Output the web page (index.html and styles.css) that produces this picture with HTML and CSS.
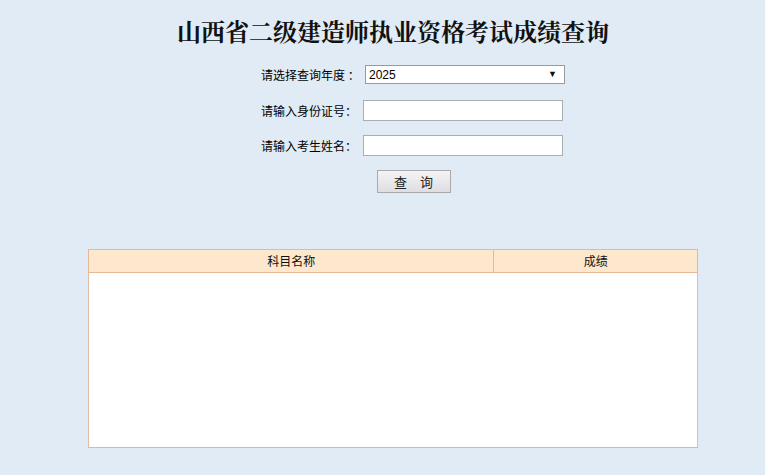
FILE: index.html
```html
<!DOCTYPE html>
<html lang="zh-CN">
<head>
<meta charset="utf-8">
<title>山西省二级建造师执业资格考试成绩查询</title>
<link rel="stylesheet" href="styles.css">
</head>
<body>
<div class="page">
  <h1 class="title">山西省二级建造师执业资格考试成绩查询</h1>
  <form class="form">
    <div class="row">
      <label class="label">请选择查询年度 ：</label>
      <div class="select-wrap">
        <select class="select"><option>2025</option></select>
        <span class="arrow">▼</span>
      </div>
    </div>
    <div class="row">
      <label class="label">请输入身份证号：</label>
      <input class="input" type="text">
    </div>
    <div class="row">
      <label class="label">请输入考生姓名：</label>
      <input class="input" type="text">
    </div>
    <div class="row row-btn">
      <button type="button" class="btn">查　询</button>
    </div>
  </form>
  <table class="result">
    <thead>
      <tr><th class="col-name">科目名称</th><th class="col-score">成绩</th></tr>
    </thead>
    <tbody>
      <tr><td colspan="2" class="empty"></td></tr>
    </tbody>
  </table>
</div>
</body>
</html>
```

FILE: styles.css
```css
html, body {
  margin: 0;
  padding: 0;
  background: #e0ebf5;
}
body {
  font-family: "Liberation Sans", "Noto Sans CJK SC", sans-serif;
  font-size: 12px;
  color: #000;
}
.page {
  padding-left: 21px;
  padding-top: 16px;
}
.title {
  margin: 0;
  text-align: center;
  font-family: "Noto Serif CJK SC", "Noto Sans CJK SC", serif;
  font-size: 24px;
  line-height: 30px;
  font-weight: 700;
  color: #111;
}
.form {
  width: 305px;
  margin: 11px 0 0 calc(50% - 132px);
}
.row {
  display: flex;
  align-items: center;
  height: 35px;
}
.row + .row {
  margin-top: 0.5px;
}
.label {
  width: 96px;
  margin-right: 6px;
  text-align: right;
  white-space: nowrap;
  font-family: "Noto Sans CJK SC", sans-serif;
  font-size: 12px;
}
.select-wrap {
  position: relative;
  margin-left: 2px;
  width: 200px;
  height: 19px;
}
.select {
  appearance: none;
  -webkit-appearance: none;
  box-sizing: border-box;
  width: 200px;
  height: 19px;
  margin: 0;
  padding: 0 0 0 3px;
  border: 1px solid #9a9a9a;
  background: #fff;
  font-family: "Liberation Sans", sans-serif;
  font-size: 12px;
  color: #000;
  border-radius: 0;
}
.arrow {
  position: absolute;
  right: 8px;
  top: 4px;
  font-size: 9px;
  line-height: 10px;
  color: #111;
  pointer-events: none;
}
.input {
  box-sizing: border-box;
  width: 200px;
  height: 21px;
  margin: 0;
  padding: 0 3px;
  border: 1px solid #a7afb5;
  background: #fff;
  border-radius: 0;
}
.row-btn {
  justify-content: center;
}
.btn {
  box-sizing: border-box;
  width: 74px;
  height: 23px;
  padding: 0;
  border: 1px solid #a9a9a9;
  background: linear-gradient(#f4f4f6, #dedee2);
  font-family: "Noto Sans CJK SC", sans-serif;
  font-size: 13px;
  color: #222;
  border-radius: 0;
}
.result {
  width: 610px;
  margin: 50px 0 0 calc(50% - 305px);
  border-collapse: collapse;
  border: 1px solid #e6b896;
  background: #fff;
}
.result th {
  height: 22px;
  padding: 0;
  background: #fde7cd;
  border: 1px solid #e6b896;
  font-family: "Noto Sans CJK SC", sans-serif;
  font-weight: normal;
  font-size: 12px;
  line-height: 22px;
  color: #111;
}
.col-name { width: 405px; }
.col-score { width: 203px; }
.result .empty {
  height: 174px;
  padding: 0;
  border: 1px solid #e0bba5;
  border-bottom-color: #d8b8a8;
}
```
